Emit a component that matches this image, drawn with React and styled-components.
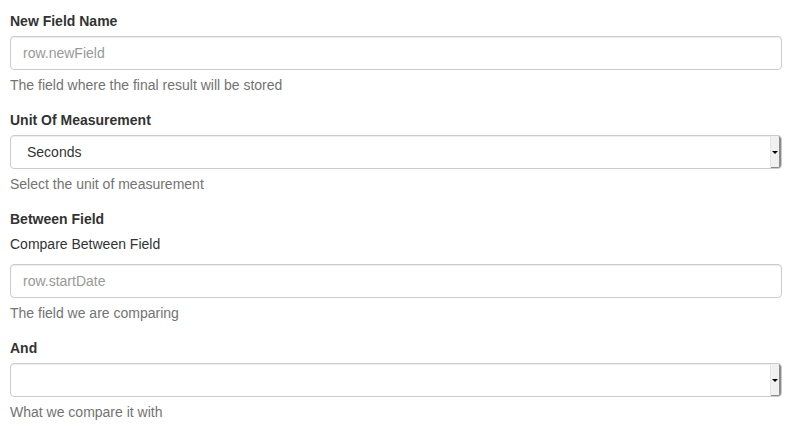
import styled, { createGlobalStyle } from "styled-components";

const GlobalStyle = createGlobalStyle`
  html, body {
    margin: 0;
    background: #fff;
  }
  body {
    font-family: "Liberation Sans", Arial, Helvetica, sans-serif;
    font-size: 14px;
    line-height: 20px;
    color: #333;
  }
  * {
    box-sizing: border-box;
  }
`;

const Page = styled.form`
  padding: 11px 20px 0 10px;
`;

const FormGroup = styled.div`
  margin-bottom: 15px;
`;

const Label = styled.label`
  display: inline-block;
  max-width: 100%;
  margin-bottom: 5px;
  font-weight: bold;
  color: #333;
`;

const SubLabel = styled.div`
  color: #333;
  margin-bottom: 10px;
`;

const Input = styled.input`
  display: block;
  width: 100%;
  height: 34px;
  padding: 6px 12px;
  font-family: inherit;
  font-size: 14px;
  line-height: 20px;
  color: #555;
  background: #fff;
  border: 1px solid #ccc;
  border-radius: 4px;
  box-shadow: inset 0 1px 1px rgba(0, 0, 0, 0.075);
  outline: none;

  &::placeholder {
    color: #999;
  }
`;

const SelectBox = styled.div`
  display: flex;
  align-items: stretch;
  width: 100%;
  height: 34px;
  background: #fff;
  border: 1px solid #ccc;
  border-radius: 4px;
  box-shadow: inset 0 1px 1px rgba(0, 0, 0, 0.075);
  overflow: hidden;
`;

const SelectValue = styled.span`
  flex: 1;
  padding: 6px 16px;
  color: #333;
`;

const ArrowButton = styled.span`
  width: 11px;
  display: flex;
  align-items: center;
  justify-content: center;
  background: #f0f0f0;
  border-left: 1px solid #e4e4e4;
  box-shadow: inset -2px -1px 0 #8a8a8a;
  border-top-right-radius: 3px;

  &::after {
    content: "";
    margin-right: 2px;
    border-left: 3px solid transparent;
    border-right: 3px solid transparent;
    border-top: 3px solid #000;
  }
`;

const HelpBlock = styled.span`
  display: block;
  margin-top: 5px;
  margin-bottom: 10px;
  color: #737373;
`;

const Select = ({ value }) => (
  <SelectBox>
    <SelectValue>{value}</SelectValue>
    <ArrowButton />
  </SelectBox>
);

export default function App() {
  return (
    <>
      <GlobalStyle />
      <Page>
        <FormGroup>
          <Label>New Field Name</Label>
          <Input placeholder="row.newField" />
          <HelpBlock>The field where the final result will be stored</HelpBlock>
        </FormGroup>
        <FormGroup>
          <Label>Unit Of Measurement</Label>
          <Select value="Seconds" />
          <HelpBlock>Select the unit of measurement</HelpBlock>
        </FormGroup>
        <FormGroup>
          <Label>Between Field</Label>
          <SubLabel>Compare Between Field</SubLabel>
          <Input placeholder="row.startDate" />
          <HelpBlock>The field we are comparing</HelpBlock>
        </FormGroup>
        <FormGroup>
          <Label>And</Label>
          <Select value="" />
          <HelpBlock>What we compare it with</HelpBlock>
        </FormGroup>
      </Page>
    </>
  );
}
